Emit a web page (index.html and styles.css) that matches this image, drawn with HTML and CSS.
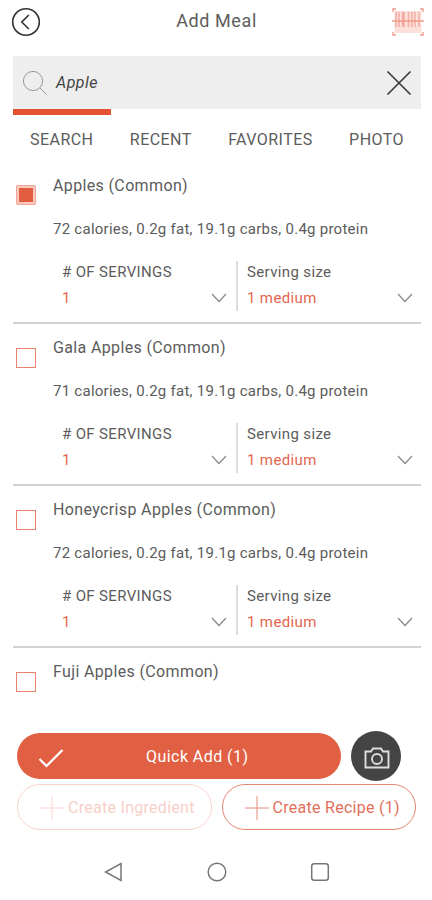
FILE: index.html
```html
<!DOCTYPE html>
<html lang="en">
<head>
  <meta charset="UTF-8" />
  <meta name="viewport" content="width=device-width, initial-scale=1.0"/>
  <title>Add Meal</title>
  <link rel="stylesheet" href="styles.css">
</head>
<body>

<header>
  <svg class="back" viewBox="0 0 30 30"><circle cx="15" cy="15" r="13.3"/><path d="M17.8 8 L10.8 15 L17.8 22"/></svg>
  <h1>Add Meal</h1>
  <svg class="barcode" viewBox="0 0 34 30">
    <path class="fill" d="M3.500 4h27v22h-27z"/>
    <path class="bars" d="M5 5v15M8 5v15M11.500 5v15M13 5v15M17.500 5v15M21 5v15M24 5v15M28 5v15"/>
    <path class="corners" d="M2 5V2H5M29 2h3v3M2 25v3H5M29 28h3v-3M1 14h32"/>
  </svg>
</header>

<div class="search-box">
  <svg class="glass" viewBox="0 0 26 26"><circle cx="11" cy="11" r="9.600"/><path d="M18 18 L24.500 24.500"/></svg>
  <span class="query">Apple</span>
  <svg class="clear" viewBox="0 0 26 26"><path d="M1.500 1.500 L24.500 24.500 M24.500 1.500 L1.500 24.500"/></svg>
</div>
<div class="tab-line"></div>

<nav class="tabs">
  <span>SEARCH</span>
  <span>RECENT</span>
  <span>FAVORITES</span>
  <span>PHOTO</span>
</nav>

<main id="foods" class="foods"></main>

<footer>
  <div class="row">
    <button class="quick-add">
      <svg class="check" viewBox="0 0 26 20"><path d="M1.500 11 L8.500 18 L24.500 2"/></svg>
      <span>Quick Add (1)</span>
    </button>
    <button class="camera">
      <svg viewBox="0 0 26 22"><path d="M1.500 4.500h5.500l2-3h8l2 3h5.500v16h-23z"/><circle cx="13" cy="12" r="5"/></svg>
    </button>
  </div>
  <div class="row create">
    <button class="outline disabled">
      <svg class="plus" viewBox="0 0 24 24"><path d="M12 0v24M0 12h24"/></svg><span>Create Ingredient</span>
    </button>
    <button class="outline recipe">
      <svg class="plus" viewBox="0 0 24 24"><path d="M12 0v24M0 12h24"/></svg><span>Create Recipe (1)</span>
    </button>
  </div>
</footer>

<div class="system-nav">
  <svg viewBox="0 0 20 20"><path d="M17 1.500v17L1.500 10z"/></svg>
  <svg viewBox="0 0 20 20"><circle cx="10" cy="10" r="8.800"/></svg>
  <svg viewBox="0 0 20 20"><rect x="1.700" y="1.700" width="16.600" height="16.600" rx="2.500"/></svg>
</div>

<script>
  const foods = [
    { name: 'Apples (Common)', calories: 72, checked: true },
    { name: 'Gala Apples (Common)', calories: 71 },
    { name: 'Honeycrisp Apples (Common)', calories: 72 },
    { name: 'Fuji Apples (Common)', calories: 72 }
  ];

  const chevron = '<svg class="chevron" viewBox="0 0 16 10"><path d="M1 1 L8 8.500 L15 1"/></svg>';

  document.getElementById('foods').innerHTML = foods.map((food, i) => `
    <div class="food">
      <div class="checkbox${food.checked ? ' checked' : ''}"></div>
      <div class="info">
        <div class="name">${food.name}</div>
        ${i === foods.length - 1 ? '' : `
        <div class="facts">${food.calories} calories, 0.2g fat, 19.1g carbs, 0.4g protein</div>
        <div class="servings">
          <div class="field amount">
            <div class="label">&#35; OF SERVINGS</div>
            <div class="value"><span>1</span>${chevron}</div>
          </div>
          <div class="field size">
            <div class="label">Serving size</div>
            <div class="value"><span>1 medium</span>${chevron}</div>
          </div>
        </div>`}
      </div>
    </div>`).join('');
</script>

</body>
</html>
```
FILE: styles.css
```css
* {
  box-sizing: border-box;
}

body {
  margin: 0;
  height: 900px;
  overflow: hidden;
  display: flex;
  flex-direction: column;
  font-family: Roboto, sans-serif;
  font-size: 16px;
  background: #fff;
  color: #5c5c5c;
}

svg {
  display: block;
  flex: none;
  fill: none;
  stroke: currentColor;
}

header {
  height: 56px;
  padding: 7px 7px 0 11px;
  display: flex;
  justify-content: space-between;
  align-items: flex-start;
}

h1 {
  margin: 2px 0 0 1px;
  font-size: 18px;
  line-height: 24px;
  font-weight: 400;
  letter-spacing: 0.6px;
}

.back {
  width: 30px;
  height: 30px;
  color: #333;
  stroke-width: 1.6;
}

.barcode {
  width: 34px;
  height: 30px;
  color: #f2aca1;
}

.barcode .fill {
  fill: #fde0db;
  stroke: none;
}

.barcode .bars {
  stroke-width: 1.5;
}

.barcode .corners {
  stroke: #ee9a8a;
  stroke-width: 1.3;
}

.search-box {
  height: 53px;
  margin: 0 11px 0 13px;
  padding: 0 9px;
  display: flex;
  align-items: center;
  background: #eee;
}

.glass {
  width: 26px;
  height: 26px;
  color: #999;
}

.query {
  flex: 1;
  margin-left: 8px;
  font-style: italic;
  letter-spacing: 0.5px;
  color: #444;
}

.clear {
  width: 26px;
  height: 26px;
  color: #3c3c3c;
  stroke-width: 1.7;
}

.tab-line {
  width: 98px;
  height: 6px;
  margin-left: 13px;
  background: #e65230;
}

.tabs {
  height: 47px;
  padding: 0 28px 0 30px;
  display: flex;
  justify-content: space-between;
  line-height: 49px;
  letter-spacing: 0.45px;
}

.foods {
  height: 557px;
  margin: 0 11px 0 13px;
}

.food {
  height: 162px;
  padding-top: 12px;
  display: flex;
  border-bottom: 2px solid #d3d3d3;
}

.food:last-child {
  border-bottom: none;
}

.checkbox {
  width: 20px;
  height: 20px;
  margin: 12px 14px 0 3px;
  border: 1px solid #e8806d;
}

.checkbox.checked {
  margin-top: 11px;
  border: 3px solid #f9c9c0;
  border-radius: 2px;
  background: #e25c40;
  outline: 1px solid #f3a496;
  outline-offset: -1px;
}

.info {
  flex: 1;
  padding-left: 3px;
}

.name {
  line-height: 24px;
  letter-spacing: 0.36px;
}

.facts {
  margin-top: 19px;
  font-size: 15px;
  line-height: 24px;
  letter-spacing: 0.26px;
}

.servings {
  height: 50px;
  margin-top: 20px;
  display: flex;
}

.field {
  font-size: 15px;
  letter-spacing: 0.36px;
}

.amount {
  width: 185px;
  padding: 0 9px 0 9px;
  border-right: 2px solid #ddd;
}

.size {
  flex: 1;
  padding: 0 8px 0 9px;
}

.label {
  line-height: 22px;
}

.value {
  display: flex;
  justify-content: space-between;
  align-items: center;
  margin-top: 4px;
  line-height: 22px;
  color: #e4654d;
}

.chevron {
  width: 16px;
  height: 10px;
  color: #888;
  stroke-width: 1.2;
}

footer {
  height: 114px;
  padding: 12px 16px 0 17px;
}

.row {
  display: flex;
  align-items: center;
  gap: 10px;
}

button {
  font: inherit;
  letter-spacing: 0.28px;
  border: none;
  padding: 0;
  display: flex;
  align-items: center;
}

.quick-add {
  width: 324px;
  height: 46px;
  padding-left: 21px;
  border-radius: 23px;
  background: #e15f43;
  color: #fff;
}

.quick-add span {
  margin-left: 82px;
  letter-spacing: 0.45px;
}

.check {
  width: 26px;
  height: 20px;
  margin-top: 4px;
  stroke-width: 2.2;
}

.camera {
  width: 50px;
  height: 50px;
  justify-content: center;
  border-radius: 50%;
  background: #444;
  color: #ddd;
}

.camera svg {
  width: 26px;
  height: 22px;
  margin: 4px 0 0 1px;
  stroke-width: 1.9;
}

.create {
  margin-top: 3px;
}

.outline {
  width: 195px;
  height: 46px;
  padding-left: 22px;
  gap: 4px;
  border: 1px solid #e58472;
  border-radius: 23px;
  background: #fff;
  color: #e2705b;
}

.outline.disabled {
  border-color: #f9d3cc;
  color: #f7cfc7;
}

.plus {
  width: 24px;
  height: 24px;
  margin-top: 2px;
  opacity: 0.8;
}

.system-nav {
  display: flex;
  justify-content: center;
  gap: 83px;
  padding: 29px 0 0 2px;
  color: #777;
}

.system-nav svg {
  width: 20px;
  height: 20px;
  stroke-width: 1.5;
}
```
